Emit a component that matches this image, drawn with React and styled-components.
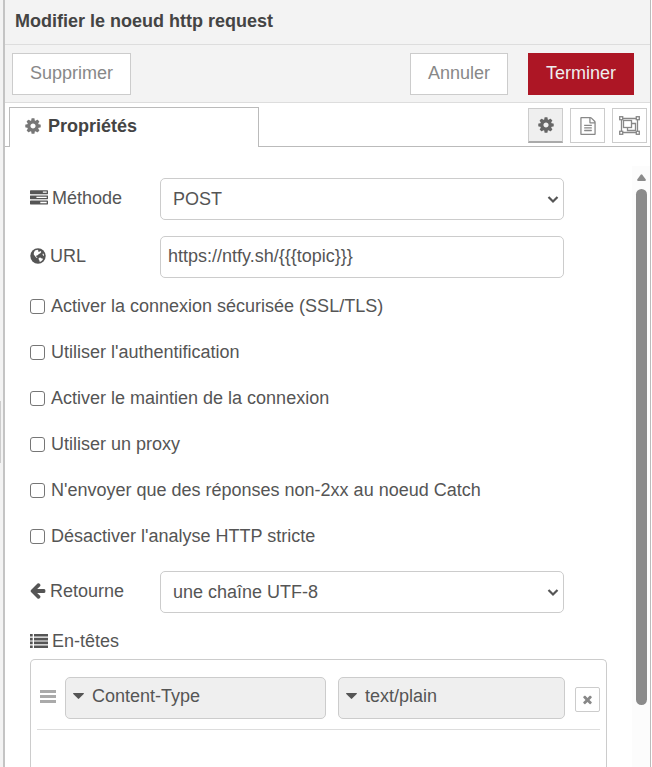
import { useState } from "react";
import styled, { createGlobalStyle } from "styled-components";

const GlobalStyle = createGlobalStyle`
  *, *::before, *::after {
    box-sizing: border-box;
  }
  body {
    margin: 0;
    background: #fff;
    color: #555;
    font-family: "Liberation Sans", Arial, sans-serif;
    font-size: 18px;
    line-height: 24px;
  }
  button, input, select {
    font: inherit;
    color: inherit;
    margin: 0;
  }
`;

const Page = styled.div`
  display: flex;
  height: 100vh;
  overflow: hidden;
`;

const Separator = styled.div`
  flex: none;
  width: 5px;
  display: flex;
  align-items: center;
  background: #f3f3f3;
  border-right: 2px solid #c4c4c4;
`;

const SeparatorGrip = styled.div`
  width: 1px;
  height: 62px;
  margin-top: 96px;
  background: #ccc;
`;

const Tray = styled.main`
  flex: 1;
  min-width: 0;
  display: flex;
  flex-direction: column;
  margin-right: 1px;
  border-right: 1px solid #bbb;
`;

const TrayHeader = styled.header`
  flex: none;
  height: 45px;
  padding: 9px 10px;
  background: #f3f3f3;
  border-bottom: 1px solid #ddd;
`;

const Title = styled.h1`
  margin: 0;
  font-size: 18px;
  line-height: 24px;
  font-weight: bold;
  color: #444;
`;

const Toolbar = styled.div`
  flex: none;
  display: flex;
  align-items: center;
  gap: 20px;
  height: 58px;
  padding: 0 16px 0 7px;
  background: #f3f3f3;
  border-bottom: 1px solid #ddd;
`;

const ToolbarButton = styled.button`
  height: 42px;
  padding: 0 17px 2px;
  margin-right: ${p => (p.$first ? "auto" : "0")};
  border: 1px solid ${p => (p.$primary ? "#ad1625" : "#ccc")};
  background: ${p => (p.$primary ? "#ad1625" : "#fff")};
  color: ${p => (p.$primary ? "#eee" : "#888")};
  cursor: pointer;
`;

const Tabs = styled.div`
  flex: none;
  display: flex;
  justify-content: space-between;
  height: 44px;
  padding: 4px 3px 0 4px;
  border-bottom: 1px solid #bbb;
`;

const Tab = styled.button`
  display: flex;
  align-items: center;
  gap: 6px;
  width: 250px;
  height: 40px;
  padding: 0 14px 4px;
  border: 1px solid #bbb;
  border-bottom: 0;
  background: #fff;
  color: #444;
  font-weight: bold;
`;

const TabIcons = styled.div`
  display: flex;
  gap: 7px;
  padding-top: 1px;
`;

const TabIcon = styled.button`
  display: flex;
  align-items: center;
  justify-content: center;
  width: 35px;
  height: 35px;
  padding: 0;
  border: 1px solid #ccc;
  border-bottom: ${p => (p.$selected ? "2px solid #aaa" : "1px solid #ccc")};
  background: ${p => (p.$selected ? "#efefef" : "#fff")};
  color: ${p => (p.$selected ? "#666" : "#888")};
`;

const Body = styled.div`
  flex: 1;
  min-height: 0;
  display: flex;
`;

const EditForm = styled.form`
  flex: 1;
  min-width: 0;
  display: flex;
  flex-direction: column;
  padding: 31px 25px 0;
`;

const FormRow = styled.div`
  flex: none;
  display: flex;
  align-items: center;
  margin-bottom: ${p => (p.$tight ? "5px" : "16px")};
`;

const Label = styled.label`
  flex: 0 0 130px;
  display: flex;
  align-items: center;
  gap: 4px;
  padding-bottom: 3px;
`;

const Field = styled.div`
  position: relative;
  flex: 0 0 70%;
`;

const TextInput = styled.input`
  display: block;
  width: 100%;
  height: 42px;
  padding: 0 7px 2px;
  border: 1px solid #ccc;
  border-radius: 5px;
  background: #fff;
`;

const Select = styled.select`
  display: block;
  width: 100%;
  height: 42px;
  padding: 0 24px 0 12px;
  border: 1px solid #ccc;
  border-radius: 5px;
  background: #fff;
  appearance: none;
`;

const Chevron = styled.svg`
  position: absolute;
  right: 5px;
  top: 17px;
  pointer-events: none;
`;

const CheckList = styled.div`
  flex: none;
  margin-bottom: 12px;
`;

const CheckRow = styled.label`
  display: flex;
  align-items: center;
  gap: 6px;
  height: 46px;
`;

const Checkbox = styled.input`
  appearance: none;
  width: 15px;
  height: 15px;
  border: 1px solid #767676;
  border-radius: 3px;
  background: #fff;
  &:checked {
    background: #555;
  }
`;

const ListTitle = styled.div`
  flex: none;
  display: flex;
  align-items: center;
  gap: 4px;
  margin-bottom: 6px;
`;

const HeaderList = styled.ol`
  flex: 1;
  margin: 0;
  padding: 7px 6px 0;
  list-style: none;
  border: 1px solid #ccc;
  border-bottom: 0;
  border-radius: 5px 5px 0 0;
`;

const HeaderItem = styled.li`
  display: grid;
  grid-template-columns: 18px 269fr 249fr 25px;
  align-items: center;
  padding: 10px 0 10px 2px;
  border-bottom: 1px solid #ddd;
`;

const DragHandle = styled.span`
  padding-bottom: 3px;
  color: #aaa;
  cursor: move;
`;

const TypedInput = styled.button`
  display: flex;
  align-items: center;
  gap: 8px;
  height: 42px;
  margin-left: ${p => (p.$wide ? "8px" : "12px")};
  margin-right: ${p => (p.$wide ? "0" : "10px")};
  padding: 0 7px 4px;
  border: 1px solid #ccc;
  border-radius: 5px;
  background: #efefef;
`;

const RemoveButton = styled.button`
  display: flex;
  align-items: center;
  justify-content: center;
  width: 25px;
  height: 25px;
  margin-top: 3px;
  padding: 0;
  border: 1px solid #ccc;
  border-radius: 2px;
  background: #fff;
  color: #888;
`;

const ScrollTrack = styled.div`
  flex: none;
  display: flex;
  flex-direction: column;
  align-items: center;
  gap: 8px;
  width: 18px;
  margin-top: 19px;
  padding-top: 8px;
  background: #fcfcfc;
  color: #8b8b8b;
`;

const ScrollThumb = styled.div`
  width: 11px;
  height: 87%;
  border-radius: 6px;
  background: #8b8b8b;
`;

const Svg = styled.svg`
  flex: none;
  display: block;
  fill: currentColor;
`;

const CogIcon = ({ size = 18, color }) => (
  <Svg width={size} height={size} viewBox="0 0 1792 1792" color={color}>
    <path d="M1152 896q0-106-75-181t-181-75-181 75-75 181 75 181 181 75 181-75 75-181zm512-109v222q0 12-8 23t-20 13l-185 28q-19 54-39 91 35 50 107 138 10 12 10 25t-9 23q-27 37-99 108t-94 71q-12 0-26-9l-138-108q-44 23-91 38-16 136-29 186-7 28-36 28h-222q-14 0-24.500-8.500t-11.500-21.500l-28-184q-49-16-90-37l-141 107q-10 9-25 9-14 0-25-11-126-114-165-168-7-10-7-23 0-12 8-23 15-21 51-66.500t54-70.500q-27-50-41-99l-183-27q-13-2-21-12.500t-8-23.500v-222q0-12 8-23t19-13l186-28q14-46 39-92-40-57-107-138-10-12-10-24 0-10 9-23 26-36 98.500-107.500t94.500-71.500q13 0 26 10l138 107q44-23 91-38 16-136 29-186 7-28 36-28h222q14 0 24.500 8.500t11.500 21.500l28 184q49 16 90 37l142-107q9-9 24-9 13 0 25 10 129 119 165 170 7 8 7 22 0 12-8 23-15 21-51 66.500t-54 70.500q26 50 41 98l183 28q13 2 21 12.500t8 23.500z" />
  </Svg>
);

const FileIcon = () => (
  <Svg width="18" height="18" viewBox="0 0 1792 1792">
    <path d="M1596 380q28 28 48 76t20 88v1152q0 40-28 68t-68 28h-1344q-40 0-68-28t-28-68v-1600q0-40 28-68t68-28h896q40 0 88 20t76 48zm-444-244v376h376q-10-29-22-41l-313-313q-12-12-41-22zm384 1528v-1024h-416q-40 0-68-28t-28-68v-416h-768v1536h1280zm-1024-864q0-14 9-23t23-9h704q14 0 23 9t9 23v64q0 14-9 23t-23 9h-704q-14 0-23-9t-9-23v-64zm736 224q14 0 23 9t9 23v64q0 14-9 23t-23 9h-704q-14 0-23-9t-9-23v-64q0-14 9-23t23-9h704zm0 256q14 0 23 9t9 23v64q0 14-9 23t-23 9h-704q-14 0-23-9t-9-23v-64q0-14 9-23t23-9h704z" />
  </Svg>
);

const GroupIcon = () => (
  <Svg width="21" height="19" viewBox="0 0 21 19">
    <g fill="none" stroke="currentColor" strokeWidth="1.3">
      <path d="M4 2.500h13M4 16.500h13M2.500 4v11M18.500 4v11" />
      <rect x="0.700" y="0.700" width="3" height="3" />
      <rect x="17.300" y="0.700" width="3" height="3" />
      <rect x="0.700" y="15.300" width="3" height="3" />
      <rect x="17.300" y="15.300" width="3" height="3" />
      <rect x="4.500" y="4.500" width="8" height="7" />
      <path d="M12.500 7.500h4v7h-8v-3" />
    </g>
  </Svg>
);

const TasksIcon = () => (
  <Svg width="18" height="18" viewBox="0 0 1792 1792">
    <path d="M1024 1408h640v-128h-640v128zm-384-512h1024v-128h-1024v128zm640-512h384v-128h-384v128zm512 832v256q0 26-19 45t-45 19h-1664q-26 0-45-19t-19-45v-256q0-26 19-45t45-19h1664q26 0 45 19t19 45zm0-512v256q0 26-19 45t-45 19h-1664q-26 0-45-19t-19-45v-256q0-26 19-45t45-19h1664q26 0 45 19t19 45zm0-512v256q0 26-19 45t-45 19h-1664q-26 0-45-19t-19-45v-256q0-26 19-45t45-19h1664q26 0 45 19t19 45z" />
  </Svg>
);

const GlobeIcon = () => (
  <Svg width="16" height="16" viewBox="0 0 16 16">
    <circle cx="8" cy="8" r="7.700" />
    <path
      fill="#fff"
      d="M5 2.400l2.400-.7 1 .8-.4 1 1.300.3 1.300-.8.700 1-1 1.200-1.700 1-.9 1-1.200.4-.5 1 1 .4.400 1-1.300-.5-1.200-1.400-1.200-1.800.3-2zM8.700 10l1.500-.4 1.600.8 1.300.4-.6 1.300-1.300 1.200-1.400.7-.4-1.500-.8-1.200zM13 5.300l.9 1.200.1 1.400-.9-.3-.6-1.200z"
    />
  </Svg>
);

const ArrowLeftIcon = () => (
  <Svg width="16" height="18" viewBox="128 0 1600 1792">
    <path d="M1664 832v128q0 53-32.500 90.500t-84.500 37.500h-704l293 294q38 36 38 90t-38 90l-75 76q-37 37-90 37-52 0-91-37l-651-652q-37-37-37-90 0-52 37-91l651-650q38-38 91-38 52 0 90 38l75 74q38 38 38 91t-38 91l-293 293h704q52 0 84.500 37.500t32.500 90.500z" />
  </Svg>
);

const ListIcon = () => (
  <Svg width="18" height="14" viewBox="0 0 18 14">
    <path d="M0 0h2.700v2.600H0zM0 3.800h2.700v2.600H0zM0 7.600h2.700v2.600H0zM0 11.400h2.700V14H0zM4 0h14v2.600H4zM4 3.800h14v2.600H4zM4 7.600h14v2.600H4zM4 11.400h14V14H4z" />
  </Svg>
);

const BarsIcon = () => (
  <Svg width="17" height="13" viewBox="0 0 17 13">
    <path d="M1 0h16v3H1zM1 5h16v3H1zM1 10h16v3H1z" />
  </Svg>
);

const CaretIcon = () => (
  <Svg width="11" height="6" viewBox="0 0 11 6">
    <path d="M0.500 0h10q.7.200.2 1L6.100 5.600q-.6.600-1.200 0L.3 1Q-.2.200.5 0z" />
  </Svg>
);

const TimesIcon = () => (
  <Svg width="13" height="13" viewBox="0 0 1792 1792">
    <path d="M1490 1322q0 40-28 68l-136 136q-28 28-68 28t-68-28l-294-294-294 294q-28 28-68 28t-68-28l-136-136q-28-28-28-68t28-68l294-294-294-294q-28-28-28-68t28-68l136-136q28-28 68-28t68 28l294 294 294-294q28-28 68-28t68 28l136 136q28 28 28 68t-28 68l-294 294 294 294q28 28 28 68z" />
  </Svg>
);

const SelectChevron = () => (
  <Chevron width="12" height="9" viewBox="0 0 12 9">
    <path d="M1.500 2l4.500 4.500L10.500 2" fill="none" stroke="#555" strokeWidth="2.200" />
  </Chevron>
);

const OPTIONS = [
  "Activer la connexion sécurisée (SSL/TLS)",
  "Utiliser l'authentification",
  "Activer le maintien de la connexion",
  "Utiliser un proxy",
  "N'envoyer que des réponses non-2xx au noeud Catch",
  "Désactiver l'analyse HTTP stricte"
];

const App = () => {
  const [url, setUrl] = useState("https://ntfy.sh/{{{topic}}}");

  return (
    <Page>
      <GlobalStyle />
      <Separator>
        <SeparatorGrip />
      </Separator>
      <Tray>
        <TrayHeader>
          <Title>Modifier le noeud http request</Title>
        </TrayHeader>
        <Toolbar>
          <ToolbarButton type="button" $first>
            Supprimer
          </ToolbarButton>
          <ToolbarButton type="button">Annuler</ToolbarButton>
          <ToolbarButton type="button" $primary>
            Terminer
          </ToolbarButton>
        </Toolbar>
        <Tabs>
          <Tab type="button">
            <CogIcon color="#777" />
            Propriétés
          </Tab>
          <TabIcons>
            <TabIcon type="button" $selected>
              <CogIcon />
            </TabIcon>
            <TabIcon type="button">
              <FileIcon />
            </TabIcon>
            <TabIcon type="button">
              <GroupIcon />
            </TabIcon>
          </TabIcons>
        </Tabs>
        <Body>
          <EditForm onSubmit={e => e.preventDefault()}>
            <FormRow>
              <Label htmlFor="method">
                <TasksIcon />
                Méthode
              </Label>
              <Field>
                <Select id="method" defaultValue="POST">
                  <option>POST</option>
                </Select>
                <SelectChevron />
              </Field>
            </FormRow>
            <FormRow $tight>
              <Label htmlFor="url">
                <GlobeIcon />
                URL
              </Label>
              <Field>
                <TextInput
                  id="url"
                  type="text"
                  value={url}
                  onChange={e => setUrl(e.target.value)}
                />
              </Field>
            </FormRow>
            <CheckList>
              {OPTIONS.map(text => (
                <CheckRow key={text}>
                  <Checkbox type="checkbox" />
                  {text}
                </CheckRow>
              ))}
            </CheckList>
            <FormRow>
              <Label htmlFor="return">
                <ArrowLeftIcon />
                Retourne
              </Label>
              <Field>
                <Select id="return">
                  <option>une chaîne UTF-8</option>
                </Select>
                <SelectChevron />
              </Field>
            </FormRow>
            <ListTitle>
              <ListIcon />
              En-têtes
            </ListTitle>
            <HeaderList>
              <HeaderItem>
                <DragHandle>
                  <BarsIcon />
                </DragHandle>
                <TypedInput type="button" $wide>
                  <CaretIcon />
                  Content-Type
                </TypedInput>
                <TypedInput type="button">
                  <CaretIcon />
                  text/plain
                </TypedInput>
                <RemoveButton type="button">
                  <TimesIcon />
                </RemoveButton>
              </HeaderItem>
            </HeaderList>
          </EditForm>
          <ScrollTrack>
            <Svg width="9" height="7" viewBox="0 0 9 7">
              <path d="M3.700.7q.8-1 1.600 0L8.800 5.600Q9 7 8 7H1Q0 7 .2 5.600z" />
            </Svg>
            <ScrollThumb />
          </ScrollTrack>
        </Body>
      </Tray>
    </Page>
  );
};

export default App;
